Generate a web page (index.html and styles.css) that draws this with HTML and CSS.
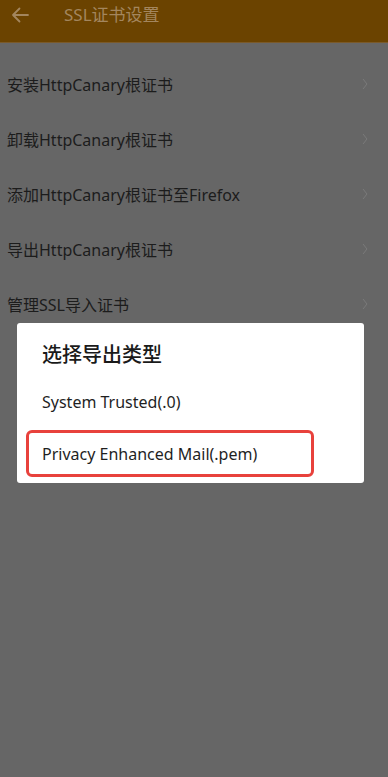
FILE: index.html
```html
<!DOCTYPE html>
<html lang="zh">
<head>
<meta charset="utf-8">
<link rel="stylesheet" href="styles.css">
</head>
<body>
<div class="app">
  <header class="toolbar">
    <svg class="back" width="18" height="16" viewBox="0 0 18 16"><path d="M17 8H2M8.5 1.5L2 8l6.5 6.5" fill="none" stroke="#a3865e" stroke-width="1.8" stroke-linecap="round" stroke-linejoin="round"/></svg>
    <div class="title">SSL证书设置</div>
  </header>
  <ul class="list">
    <li class="item"><span>安装HttpCanary根证书</span><svg class="chev" width="6" height="12" viewBox="0 0 6 12"><path d="M1 1l4 5-4 5" fill="none" stroke="#7a7a7a" stroke-width="1"/></svg></li>
    <li class="item"><span>卸载HttpCanary根证书</span><svg class="chev" width="6" height="12" viewBox="0 0 6 12"><path d="M1 1l4 5-4 5" fill="none" stroke="#7a7a7a" stroke-width="1"/></svg></li>
    <li class="item"><span>添加HttpCanary根证书至Firefox</span><svg class="chev" width="6" height="12" viewBox="0 0 6 12"><path d="M1 1l4 5-4 5" fill="none" stroke="#7a7a7a" stroke-width="1"/></svg></li>
    <li class="item"><span>导出HttpCanary根证书</span><svg class="chev" width="6" height="12" viewBox="0 0 6 12"><path d="M1 1l4 5-4 5" fill="none" stroke="#7a7a7a" stroke-width="1"/></svg></li>
    <li class="item"><span>管理SSL导入证书</span><svg class="chev" width="6" height="12" viewBox="0 0 6 12"><path d="M1 1l4 5-4 5" fill="none" stroke="#7a7a7a" stroke-width="1"/></svg></li>
  </ul>
  <div class="dialog">
    <div class="dialog-title">选择导出类型</div>
    <div class="option">System Trusted(.0)</div>
    <div class="option selected">Privacy Enhanced Mail(.pem)</div>
  </div>
</div>
</body>
</html>
```
FILE: styles.css
```css
* { box-sizing: border-box; }
html, body { margin: 0; padding: 0; }
body {
  background: #666666;
  font-family: "Noto Sans", "Noto Sans CJK SC", sans-serif;
  width: 388px;
  height: 777px;
  overflow: hidden;
}
.app { position: relative; width: 388px; height: 777px; }
.toolbar {
  height: 43px;
  background: #6b4300;
  border-bottom: 1px solid #7a5a2a;
  display: flex;
  align-items: center;
  padding: 0 0 12px 11px;
}
.back { display: block; }
.title {
  margin-left: 35px;
  color: #a3865e;
  font-size: 17px;
  line-height: 20px;
}
.list { list-style: none; margin: 0; padding: 13px 0 0 0; }
.item {
  height: 55px;
  display: flex;
  align-items: center;
  justify-content: space-between;
  padding: 0 20px 0 7px;
  color: #1c1c1c;
  font-size: 16px;
}
.chev { display: block; }
.dialog {
  position: absolute;
  left: 17px;
  top: 323px;
  width: 347px;
  height: 160px;
  background: #fff;
  border-radius: 3px;
  padding: 18px 50px 0 9px;
}
.dialog-title {
  font-size: 20px;
  font-weight: 500;
  color: #1a1a1a;
  padding-left: 16px;
  line-height: 28px;
}
.option {
  font-size: 16px;
  color: #1f1f1f;
  line-height: 24px;
  padding: 0 16px;
  margin-top: 21px;
}
.option.selected {
  margin-top: 16px;
  border: 3px solid #e8413c;
  border-radius: 6px;
  height: 47px;
  display: flex;
  align-items: center;
  padding: 0 13px;
}
```
